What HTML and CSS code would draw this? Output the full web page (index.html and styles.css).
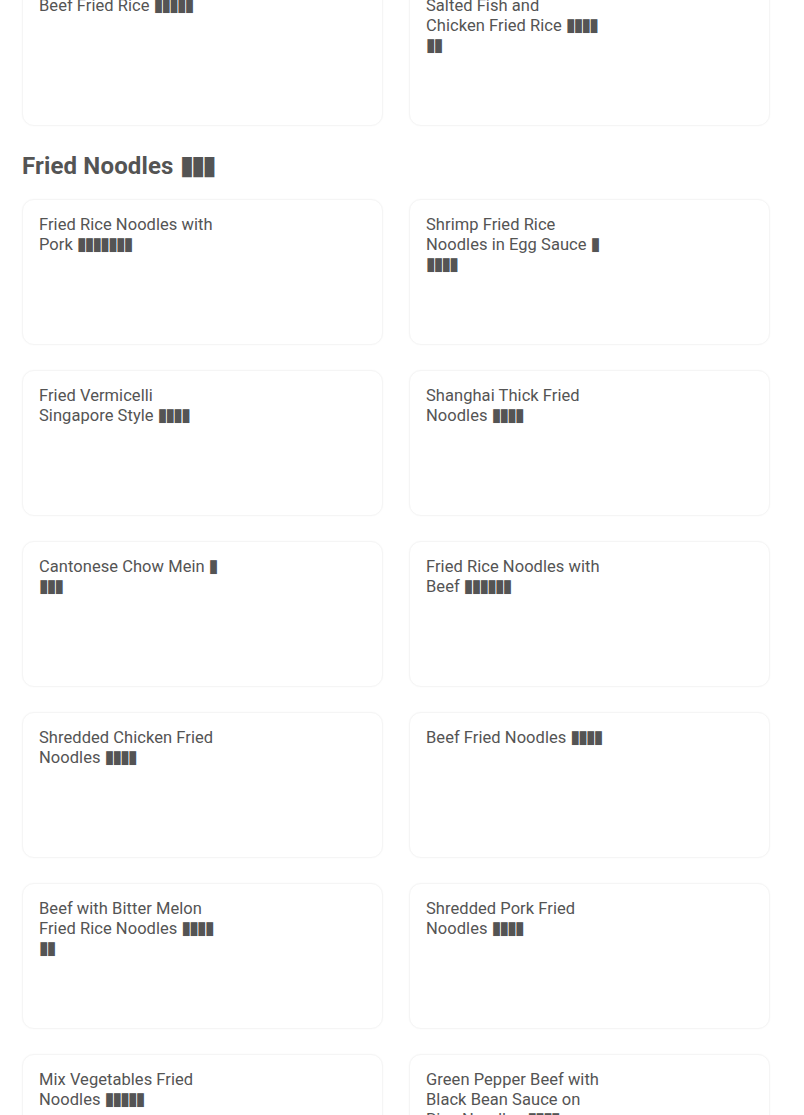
FILE: index.html
```html
<!DOCTYPE html>
<html lang="en">
<head>
<meta charset="utf-8">
<title>Menu</title>
<link rel="stylesheet" href="styles.css">
</head>
<body>
<main class="menu">
  <section class="section section-first">
    <div class="grid">
      <article class="card"><div class="name">Beef Fried Rice <span class="zh">▮▮▮▮▮</span></div></article>
      <article class="card"><div class="name">Salted Fish and<br>Chicken Fried Rice <span class="zh">▮▮▮▮▮▮</span></div></article>
    </div>
  </section>
  <section class="section">
    <h2 class="section-title">Fried Noodles <span class="zh">▮▮▮</span></h2>
    <div class="grid">
      <article class="card"><div class="name">Fried Rice Noodles with Pork <span class="zh">▮▮▮▮▮▮▮</span></div></article>
      <article class="card"><div class="name">Shrimp Fried Rice Noodles in Egg Sauce <span class="zh">▮▮▮▮▮</span></div></article>
      <article class="card"><div class="name">Fried Vermicelli Singapore Style <span class="zh">▮▮▮▮</span></div></article>
      <article class="card"><div class="name">Shanghai Thick Fried Noodles <span class="zh">▮▮▮▮</span></div></article>
      <article class="card"><div class="name">Cantonese Chow Mein <span class="zh">▮▮▮▮</span></div></article>
      <article class="card"><div class="name">Fried Rice Noodles with Beef <span class="zh">▮▮▮▮▮▮</span></div></article>
      <article class="card"><div class="name">Shredded Chicken Fried Noodles <span class="zh">▮▮▮▮</span></div></article>
      <article class="card"><div class="name">Beef Fried Noodles <span class="zh">▮▮▮▮</span></div></article>
      <article class="card"><div class="name">Beef with Bitter Melon Fried Rice Noodles <span class="zh">▮▮▮▮▮▮</span></div></article>
      <article class="card"><div class="name">Shredded Pork Fried Noodles <span class="zh">▮▮▮▮</span></div></article>
      <article class="card"><div class="name">Mix Vegetables Fried Noodles <span class="zh">▮▮▮▮▮</span></div></article>
      <article class="card"><div class="name">Green Pepper Beef with Black Bean Sauce on Rice Noodles <span class="zh">▮▮▮▮</span></div></article>
    </div>
  </section>
</main>
</body>
</html>
```
FILE: styles.css
```css
html, body {
  margin: 0;
  padding: 0;
  background: #ffffff;
  overflow: hidden;
}
body {
  font-family: Roboto, "Liberation Sans", sans-serif;
  color: #545454;
}
.menu {
  padding: 0 34px 0 22px;
}
.section-first {
  margin-top: -20px;
}
.grid {
  display: grid;
  grid-template-columns: 1fr 1fr;
  column-gap: 26px;
  row-gap: 25px;
}
.card {
  box-sizing: border-box;
  height: 146px;
  border: 1px solid #f5f5f5;
  border-radius: 12px;
  box-shadow: 0 0 2px rgba(0, 0, 0, 0.03);
  padding: 15px 16px;
  background: #fff;
}
.name {
  width: 178.5px;
  font-size: 16.5px;
  font-weight: 400;
  line-height: 20px;
  letter-spacing: 0.05px;
}
.section-title {
  margin: 24px 0 17px;
  font-size: 24px;
  font-weight: 700;
  line-height: 32px;
  letter-spacing: 0.15px;
}
.zh {
  font-family: "DejaVu Sans", sans-serif;
  font-weight: 400;
  font-size: 1.1em;
  line-height: 0;
  letter-spacing: -2.2px;
  word-break: break-all;
}
.section-title .zh {
  letter-spacing: -3.2px;
}
```
